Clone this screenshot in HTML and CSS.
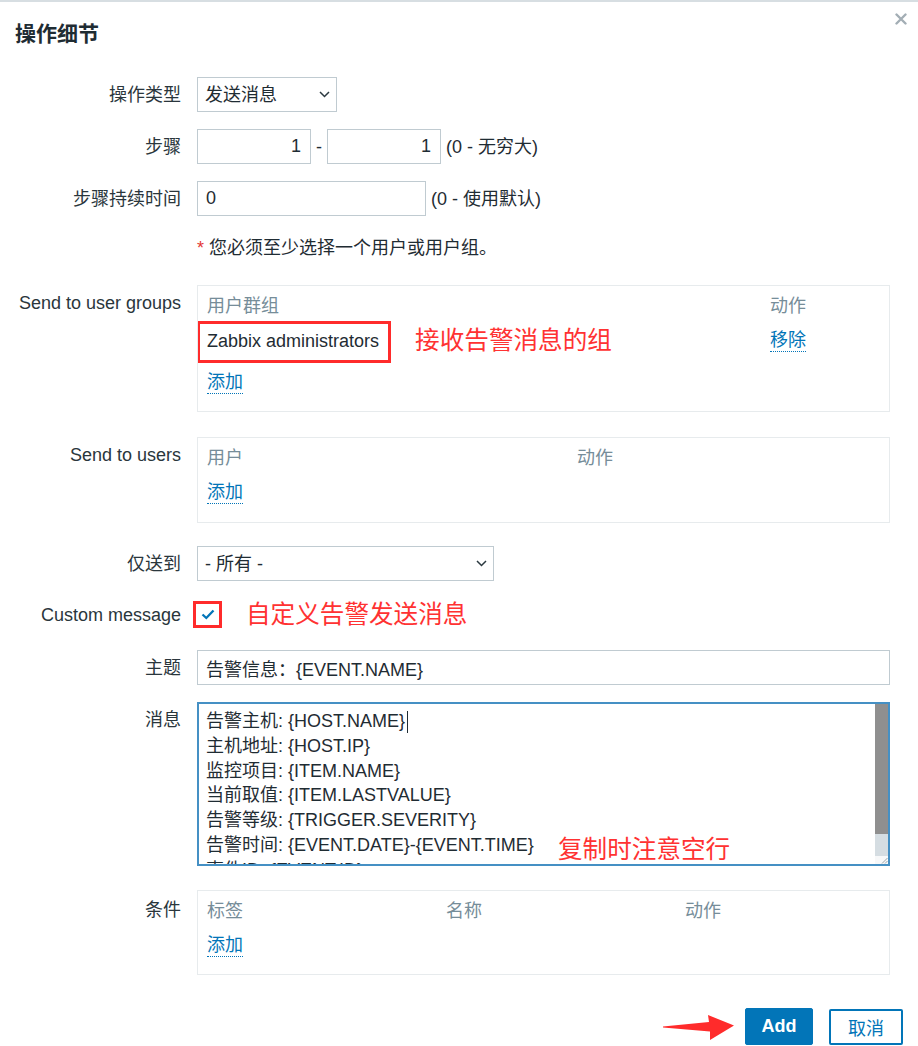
FILE: index.html
```html
<!DOCTYPE html>
<html lang="zh-CN">
<head>
<meta charset="utf-8">
<title>操作细节</title>
<link rel="stylesheet" href="styles.css">
</head>
<body>
<div class="dialog">
  <div class="dialog-header">
    <h4 class="dialog-title">操作细节</h4>
    <button class="close-btn" type="button" aria-label="关闭">
      <svg width="12" height="12" viewBox="0 0 12 12"><path d="M1.5 1.5 L10.5 10.5 M10.5 1.5 L1.5 10.5" stroke="#a3aeb5" stroke-width="2.4" stroke-linecap="round" fill="none"/></svg>
    </button>
  </div>

  <form class="form">
    <div class="row gap17">
      <label class="lbl">操作类型</label>
      <div class="ctl">
        <div class="select-wrap w140">
          <select class="select"><option>发送消息</option></select>
          <svg class="chev" width="11" height="7" viewBox="0 0 11 7"><path d="M1 1 L5.5 5.5 L10 1" stroke="#2b3940" stroke-width="1.5" fill="none"/></svg>
        </div>
      </div>
    </div>

    <div class="row gap17">
      <label class="lbl">步骤</label>
      <div class="ctl inline">
        <input class="input num w114" type="text" value="1">
        <span class="dash">-</span>
        <input class="input num w114" type="text" value="1">
        <span class="hint">(0 - 无穷大)</span>
      </div>
    </div>

    <div class="row gap20">
      <label class="lbl">步骤持续时间</label>
      <div class="ctl inline">
        <input class="input w229" type="text" value="0">
        <span class="hint">(0 - 使用默认)</span>
      </div>
    </div>

    <div class="row gap25">
      <span class="lbl"></span>
      <div class="ctl note"><span class="req">*</span> 您必须至少选择一个用户或用户组。</div>
    </div>

    <div class="row top gap25">
      <label class="lbl">Send to user groups</label>
      <div class="ctl">
        <div class="box h127">
          <div class="grid g-groups">
            <div class="th">用户群组</div>
            <div class="th">动作</div>
            <div class="td tall">
              <span class="marked">Zabbix administrators</span>
              <span class="note-red inline-note">接收告警消息的组</span>
            </div>
            <div class="td tall"><a class="link" href="#">移除</a></div>
          </div>
          <div class="add-row"><a class="link" href="#">添加</a></div>
        </div>
      </div>
    </div>

    <div class="row top gap23">
      <label class="lbl">Send to users</label>
      <div class="ctl">
        <div class="box h86">
          <div class="grid g-users">
            <div class="th">用户</div>
            <div class="th">动作</div>
          </div>
          <div class="add-row"><a class="link" href="#">添加</a></div>
        </div>
      </div>
    </div>

    <div class="row gap17">
      <label class="lbl">仅送到</label>
      <div class="ctl">
        <div class="select-wrap w297">
          <select class="select"><option>- 所有 -</option></select>
          <svg class="chev" width="11" height="7" viewBox="0 0 11 7"><path d="M1 1 L5.5 5.5 L10 1" stroke="#2b3940" stroke-width="1.5" fill="none"/></svg>
        </div>
      </div>
    </div>

    <div class="row cb-row gap19">
      <label class="lbl">Custom message</label>
      <div class="ctl inline">
        <span class="cb" role="checkbox" aria-checked="true">
          <svg width="14" height="11" viewBox="0 0 14 11"><path d="M1.5 5.5 L5.3 9 L12.5 1.5" stroke="#0275b8" stroke-width="2.3" fill="none"/></svg>
        </span>
        <span class="note-red cb-note">自定义告警发送消息</span>
      </div>
    </div>

    <div class="row gap17">
      <label class="lbl">主题</label>
      <div class="ctl">
        <input class="input w693" type="text" value="告警信息：{EVENT.NAME}">
      </div>
    </div>

    <div class="row top gap24">
      <label class="lbl">消息</label>
      <div class="ctl">
        <div class="ta-wrap">
          <textarea class="textarea" spellcheck="false">告警主机: {HOST.NAME}
主机地址: {HOST.IP}
监控项目: {ITEM.NAME}
当前取值: {ITEM.LASTVALUE}
告警等级: {TRIGGER.SEVERITY}
告警时间: {EVENT.DATE}-{EVENT.TIME}
事件ID: {EVENT.ID}</textarea>
          <span class="caret"></span>
          <div class="scrollbar" aria-hidden="true">
            <div class="sb-thumb"></div>
            <div class="sb-track"></div>
            <div class="sb-corner">
              <svg width="7" height="7" viewBox="0 0 7 7"><path d="M6.5 1 L1 6.5 M6.5 4 L4 6.5" stroke="#9aa4aa" stroke-width="1" fill="none"/></svg>
            </div>
          </div>
          <span class="note-red ta-note">复制时注意空行</span>
        </div>
      </div>
    </div>

    <div class="row top gap33">
      <label class="lbl lbl-cond">条件</label>
      <div class="ctl">
        <div class="box h85">
          <div class="grid g-cond">
            <div class="th">标签</div>
            <div class="th">名称</div>
            <div class="th">动作</div>
          </div>
          <div class="add-row"><a class="link" href="#">添加</a></div>
        </div>
      </div>
    </div>

    <div class="actions">
      <svg class="arrow" width="72" height="30" viewBox="0 0 72 30"><polygon points="0,14.5 46,10 45,3 71,13.5 47,28 47,19.5 0,15.5" fill="#ff2b2b"/></svg>
      <button class="btn btn-primary" type="button">Add</button>
      <button class="btn btn-alt" type="button">取消</button>
    </div>
  </form>
</div>
</body>
</html>
```

FILE: styles.css
```css
* { box-sizing: border-box; }

html, body {
  margin: 0;
  background: #ffffff;
}

body {
  font-family: "Liberation Sans", "Noto Sans CJK SC", sans-serif;
  font-size: 18px;
  color: #1f2c33;
}

.dialog {
  position: relative;
  width: 918px;
  height: 1046px;
  border-top: 2px solid #d7dee2;
  padding: 0 15px;
  overflow: hidden;
}

.dialog-header {
  height: 75px;
  padding-top: 19px;
}

.dialog-title {
  margin: 0;
  font-size: 21px;
  font-weight: bold;
  line-height: 26px;
  color: #1f2c33;
}

.close-btn {
  position: absolute;
  top: 11px;
  right: 11px;
  width: 12px;
  height: 12px;
  padding: 0;
  border: 0;
  background: none;
  display: flex;
}

.form {
  margin: 0;
}

.row {
  display: grid;
  grid-template-columns: 166px 693px;
  column-gap: 16px;
  align-items: center;
}

.row.top { align-items: start; }
.row.top .lbl { padding-top: 6px; }
.row.top .lbl-cond { padding-top: 8px; }

.gap17 { margin-bottom: 17px; }
.gap19 { margin-bottom: 19px; }
.gap20 { margin-bottom: 20px; }
.gap23 { margin-bottom: 23px; }
.gap24 { margin-bottom: 24px; }
.gap25 { margin-bottom: 25px; }
.gap33 { margin-bottom: 33px; }

.lbl {
  text-align: right;
  line-height: 24px;
  color: #2a363c;
  white-space: nowrap;
}

.ctl { min-width: 0; }
.ctl.inline {
  display: flex;
  align-items: center;
}

.input, .select {
  height: 35px;
  border: 1px solid #c0cbd1;
  background: #fff;
  font-family: "Liberation Sans", "Noto Sans CJK SC", sans-serif;
  font-size: 18px;
  color: #1f2c33;
  padding: 0 8px;
  outline: none;
  border-radius: 0;
}

.input.num { text-align: right; padding-right: 9px; }

.w114 { width: 114px; }
.w140 { width: 140px; }
.w229 { width: 229px; }
.w297 { width: 297px; }
.w693 { width: 693px; }

.dash { margin: 0 5px; line-height: 24px; }
.hint { margin-left: 5px; line-height: 24px; white-space: nowrap; }

.select-wrap {
  position: relative;
  display: block;
}

.select {
  width: 100%;
  appearance: none;
  -webkit-appearance: none;
  padding-left: 7px;
}

.chev {
  position: absolute;
  right: 7px;
  top: 14px;
  pointer-events: none;
}

.note { line-height: 24px; height: 24px; }
.req { color: #e33734; }

.box {
  border: 1px solid #e7ebed;
  padding: 8px 0 0 9px;
  overflow: hidden;
}
.h127 { height: 127px; }
.h86 { height: 86px; }
.h85 { height: 85px; }

.grid { display: grid; }
.g-groups { grid-template-columns: 563px auto; }
.g-users { grid-template-columns: 370px auto; }
.g-cond { grid-template-columns: 239px 239px auto; }

.th {
  color: #768d99;
  line-height: 24px;
  height: 35px;
}

.td {
  line-height: 24px;
  height: 42px;
}

.marked {
  position: relative;
  display: inline-block;
  line-height: 24px;
  vertical-align: top;
}
.marked::after {
  content: "";
  position: absolute;
  left: -10px;
  right: -12px;
  top: -8px;
  bottom: -10px;
  border: 3px solid #ff2b2b;
}

.note-red {
  color: #ff3232;
  font-size: 24.6px;
  line-height: 28px;
  white-space: nowrap;
}

.inline-note {
  display: inline-block;
  margin-left: 31px;
  vertical-align: top;
  margin-top: -2px;
}

.link {
  display: inline-block;
  color: #0275b8;
  text-decoration: none;
  line-height: 22px;
  border-bottom: 1px dotted #0275b8;
  vertical-align: top;
}

.add-row { line-height: 24px; height: 24px; }

.cb-row { height: 33px; }

.cb {
  display: inline-flex;
  align-items: center;
  justify-content: center;
  width: 29px;
  height: 27px;
  border: 3px solid #ff2b2b;
  background: #fff;
  margin-left: -4px;
}

.cb-note { margin-left: 24px; }

.ta-wrap {
  position: relative;
  width: 693px;
  height: 164px;
}

.textarea {
  display: block;
  width: 693px;
  height: 164px;
  border: 2px solid #4590c4;
  padding: 5px 16px 5px 7px;
  font-family: "Liberation Sans", "Noto Sans CJK SC", sans-serif;
  font-size: 18px;
  line-height: 24.8px;
  color: #1f2c33;
  background: #fff;
  outline: none;
  resize: none;
  overflow: hidden;
  border-radius: 0;
}

.caret {
  position: absolute;
  left: 210px;
  top: 9px;
  width: 1px;
  height: 22px;
  background: #1f2c33;
}

.scrollbar {
  position: absolute;
  top: 2px;
  right: 2px;
  bottom: 2px;
  width: 13px;
  display: flex;
  flex-direction: column;
}

.sb-thumb {
  height: 130px;
  background: #8f8f8f;
}

.sb-track {
  flex: 1;
  background: #d5dde2;
}

.sb-corner {
  height: 8px;
  background: #f7f8f9;
  display: flex;
  justify-content: flex-end;
  align-items: flex-end;
}

.ta-note {
  position: absolute;
  left: 361px;
  top: 134px;
}

.actions {
  display: flex;
  justify-content: flex-end;
  align-items: center;
  gap: 16px;
}

.arrow { margin-right: -6px; }

.btn {
  height: 37px;
  font-family: "Liberation Sans", "Noto Sans CJK SC", sans-serif;
  font-size: 18px;
  border-radius: 2px;
  padding: 0;
  cursor: pointer;
}

.btn-primary {
  width: 68px;
  background: #0275b8;
  border: 1px solid #0275b8;
  color: #ffffff;
  font-weight: bold;
}

.btn-alt {
  width: 74px;
  height: 36px;
  background: #ffffff;
  border: 2px solid #0275b8;
  color: #0275b8;
}
```
